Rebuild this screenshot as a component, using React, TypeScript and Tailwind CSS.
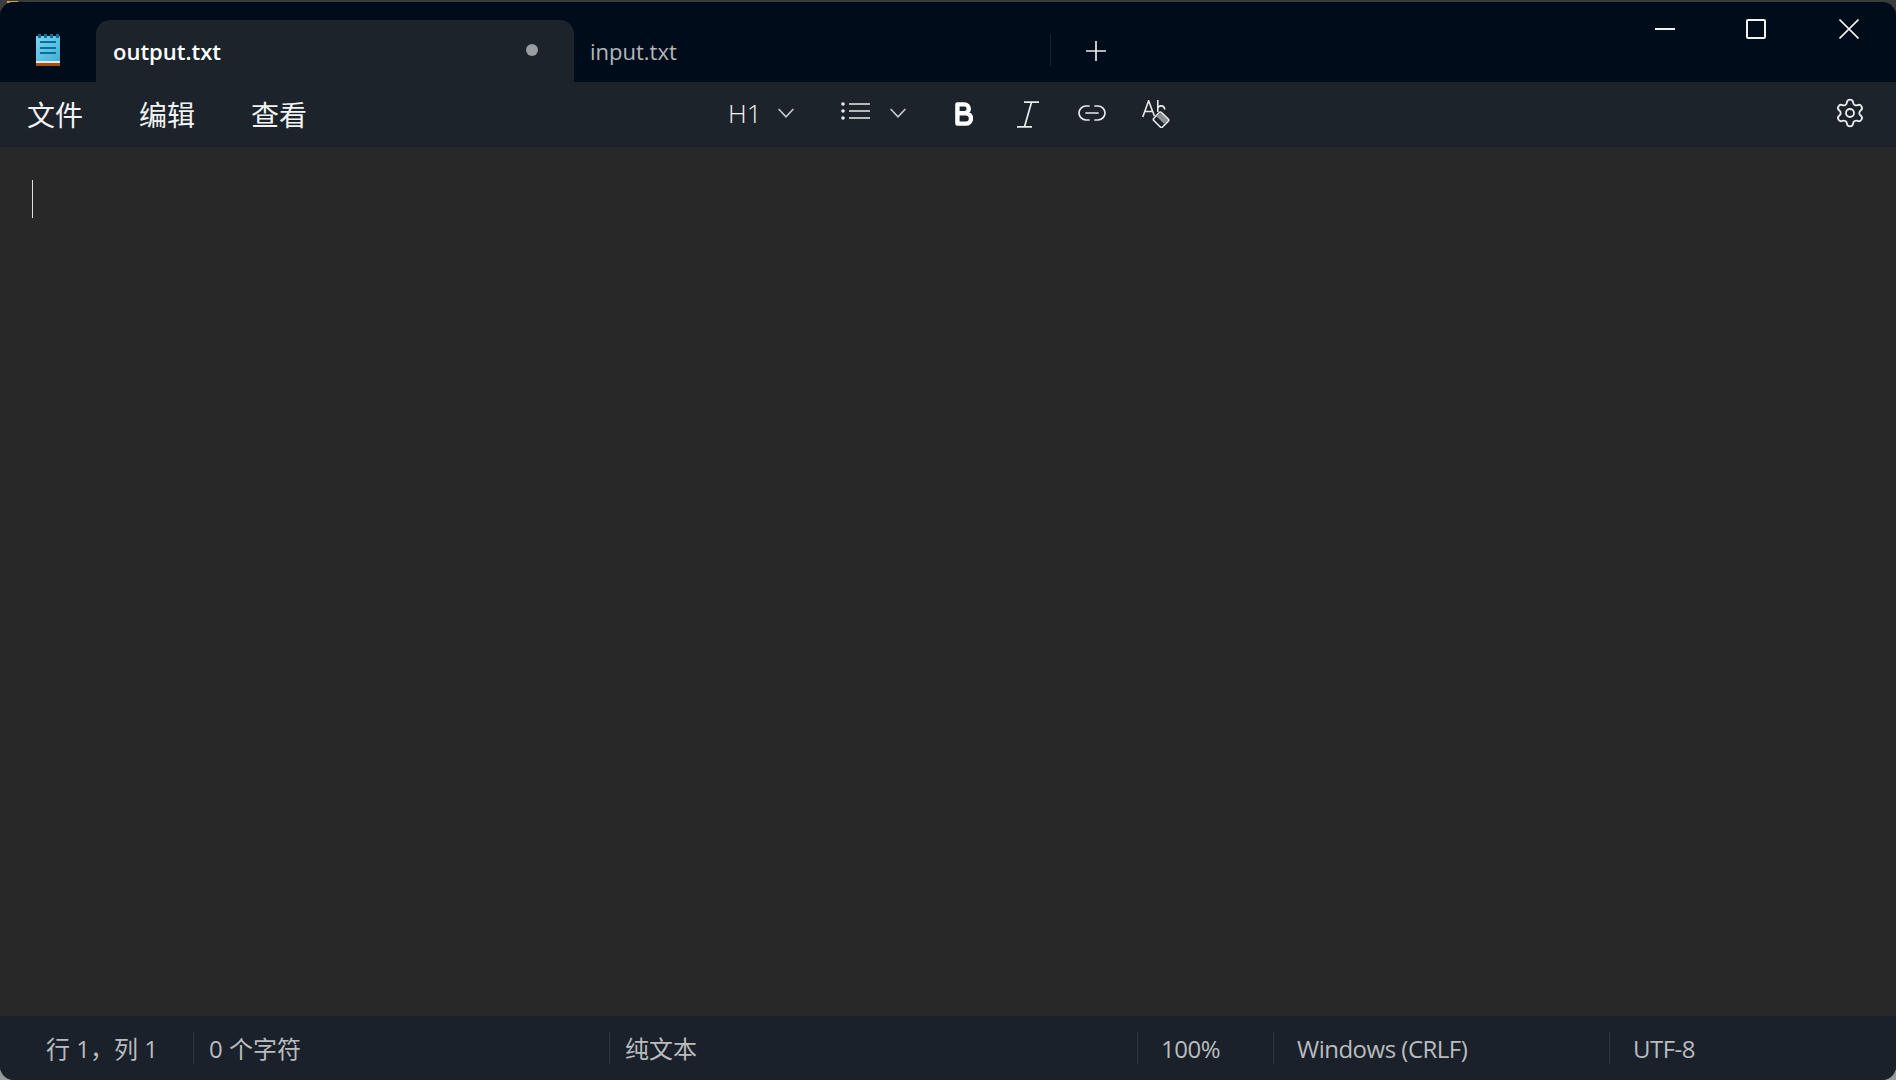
import { Settings } from "lucide-react";

const cjk = "font-['Segoe_UI','Open_Sans','Noto_Sans_CJK_SC',sans-serif]";

function NotepadIcon() {
  return (
    <svg width="24" height="32" viewBox="0 0 24 32">
      <defs>
        <linearGradient id="page" x1="0" y1="0" x2="1" y2="1">
          <stop offset="0" stopColor="#7fd4f2" />
          <stop offset="1" stopColor="#3fb0d8" />
        </linearGradient>
      </defs>
      <rect x="0" y="2" width="24" height="25" fill="url(#page)" />
      <rect x="2" y="0" width="3" height="4" fill="#0a6f96" />
      <rect x="8" y="0" width="3" height="4" fill="#0a6f96" />
      <rect x="14" y="0" width="3" height="4" fill="#0a6f96" />
      <rect x="20" y="0" width="3" height="4" fill="#0a6f96" />
      <rect x="4" y="7" width="16" height="2" fill="#0a6f96" />
      <rect x="4" y="13" width="16" height="2" fill="#0a6f96" />
      <rect x="4" y="18" width="16" height="2" fill="#0a6f96" />
      <rect x="0" y="27" width="24" height="2" fill="#e6e6e6" />
      <rect x="0" y="29" width="24" height="3" fill="#a8500f" />
    </svg>
  );
}

function Chevron({ className }: { className: string }) {
  return (
    <svg width="16" height="10" viewBox="0 0 16 10" fill="none" stroke="#c8cacc" strokeWidth="1.6" className={className}>
      <path d="M0.600 1L8 8.800L15.400 1" />
    </svg>
  );
}

function ListIcon() {
  return (
    <svg width="29" height="18" viewBox="0 0 29 18" fill="none" stroke="#e8eaec" strokeWidth="1.6">
      <circle cx="2" cy="2" r="1.800" fill="#e8eaec" stroke="none" />
      <circle cx="2" cy="9" r="1.800" fill="#e8eaec" stroke="none" />
      <circle cx="2" cy="16" r="1.800" fill="#e8eaec" stroke="none" />
      <path d="M8 2h21M8 9h21M8 16h21" />
    </svg>
  );
}

function BoldIcon() {
  return (
    <svg width="18" height="24" viewBox="0 0 18 24" fill="none" stroke="#fff" strokeWidth="4.4" strokeLinejoin="round">
      <path d="M2.400 2.400h7a4.400 4.400 0 0 1 0 8.800h-7zM2.400 11.200h8.400a5 5 0 0 1 0 10.400h-8.400z" />
    </svg>
  );
}

function ItalicIcon() {
  return (
    <svg width="24" height="27" viewBox="0 0 24 27" fill="none" stroke="#e8eaec" strokeWidth="1.7">
      <path d="M8 1.200h15M1 25.800h15M15.500 1.200L8.500 25.800" />
    </svg>
  );
}

function LinkIcon() {
  return (
    <svg width="28" height="16" viewBox="0 0 28 16" fill="none" stroke="#e8eaec" strokeWidth="1.7" strokeLinecap="round">
      <path d="M11 1H8a7 7 0 0 0 0 14h3M17 1h3a7 7 0 0 1 0 14h-3M8 8h12" />
    </svg>
  );
}

function ClearFormatIcon() {
  return (
    <svg width="28" height="28" viewBox="0 0 28 28" fill="none" stroke="#e8eaec" strokeWidth="1.6">
      <path d="M0.800 17L6.600 0.800L12.400 16M2.800 11.500h7.600" />
      <path d="M15.800 0v12M15.800 8c0.800-2.600 6.400-3.500 7 1.500" />
      <path d="M19.500 12.500l6.800 6.500a1.500 1.500 0 0 1 0 2.200l-5.800 5.800a1.500 1.500 0 0 1-2.200 0l-6.500-6.500a1.500 1.500 0 0 1 0-2.200l5.500-5.800a1.500 1.500 0 0 1 2.200 0z" />
      <path d="M14.500 16.500l7.500 7.300l4.300-3.800a1 1 0 0 0 0-1l-6.800-6.500z" fill="#e8eaec" fillOpacity="0.55" stroke="none" />
    </svg>
  );
}

function StatusCell({ width, latin, children }: { width: string; latin?: boolean; children: React.ReactNode }) {
  return (
    <div className={`${width} flex h-8 items-center border-l border-[#2d343c] ${latin ? "pl-[23px] tracking-[-0.5px]" : "pl-[15px]"}`}>
      <span className="mt-[2px]">{children}</span>
    </div>
  );
}

export default function App() {
  return (
    <div className="relative h-[1080px] w-[1896px] overflow-hidden bg-linear-to-b from-[#3c3c3c] via-[#3c3c3c] to-[#9a9a9a] pt-[2px]">
      <div className="absolute top-px left-[7px] h-[2px] w-[11px] bg-[#c9a24a]" />
      <div className={`relative flex h-[1078px] flex-col overflow-hidden rounded-[14px] bg-[#282828] ${cjk}`}>
        {/* Title bar with tabs */}
        <div className="flex h-[80px] shrink-0 bg-[#000c1a]">
          <div className="flex w-[96px] shrink-0 justify-center pt-[32px]">
            <NotepadIcon />
          </div>
          <div className="mt-[18px] flex h-[62px] w-[478px] shrink-0 items-center justify-between rounded-t-[14px] bg-[#1c232b] pr-[36px] pl-[17px] text-[22px] font-semibold text-white">
            <span>output.txt</span>
            <span className="-mt-[2px] h-3 w-3 rounded-full bg-[#9a9da1]" />
          </div>
          <div className="mt-[32px] flex h-8 w-[477px] shrink-0 items-center border-r border-[#1c232b] pl-[16px] text-[22px] text-[#b4b7ba]">
            <span className="mt-[2px]">input.txt</span>
          </div>
          <div className="pt-[39px] pl-[35px]">
            <svg width="20" height="20" viewBox="0 0 20 20" stroke="#e8eaec" strokeWidth="1.7">
              <path d="M0 10h20M10 0v20" />
            </svg>
          </div>
          <div className="flex-1" />
          {/* Window controls */}
          <div className="flex h-10 items-center gap-[71px] pt-[14px] pr-[37px]">
            <div className="h-[2px] w-5 bg-[#f2f2f2]" />
            <div className="h-5 w-5 rounded-[2px] border-2 border-[#f2f2f2]" />
            <svg width="20" height="20" viewBox="0 0 20 20" stroke="#f2f2f2" strokeWidth="1.6" className="ml-[2px]">
              <path d="M0.500 0.500l19 19M19.500 0.500l-19 19" />
            </svg>
          </div>
        </div>

        {/* Toolbar */}
        <div className="flex h-[65px] shrink-0 items-center border-b border-[#181e24] bg-[#1c232b] text-[#f2f3f4]">
          <div className="mt-[2px] flex w-[728px] shrink-0 gap-[56px] pl-[27px] text-[28px]">
            <span>文件</span>
            <span>编辑</span>
            <span>查看</span>
          </div>
          <span className="-mt-[2px] w-[50px] text-[26px] font-light">H1</span>
          <Chevron className="-mt-[3px]" />
          <div className="ml-[47px] -mt-[6px]">
            <ListIcon />
          </div>
          <Chevron className="ml-[20px] -mt-[3px]" />
          <div className="ml-[49px]">
            <BoldIcon />
          </div>
          <div className="ml-[43px]">
            <ItalicIcon />
          </div>
          <div className="ml-[38px] -mt-[3px]">
            <LinkIcon />
          </div>
          <div className="ml-[36px]">
            <ClearFormatIcon />
          </div>
          <div className="flex-1" />
          <Settings size={32} strokeWidth={1.4} className="mr-[30px] -mt-[2px] text-[#e8eaec]" />
        </div>

        {/* Editor */}
        <div className="flex-1 pt-[33px] pl-[32px]">
          <div className="h-[38px] w-px bg-[#e0e0e0]" />
        </div>

        {/* Status bar */}
        <div className="flex h-[64px] shrink-0 items-center bg-[#1a212a] pl-[46px] text-[24px] text-[#b9bcbf]">
          <div className="mt-[2px] w-[147px]">行 1，列 1</div>
          <StatusCell width="w-[416px]">0 个字符</StatusCell>
          <StatusCell width="w-[528px]">纯文本</StatusCell>
          <StatusCell width="w-[136px]" latin>100%</StatusCell>
          <StatusCell width="w-[336px]" latin>Windows (CRLF)</StatusCell>
          <StatusCell width="w-[200px]" latin>UTF-8</StatusCell>
        </div>
      </div>
    </div>
  );
}
